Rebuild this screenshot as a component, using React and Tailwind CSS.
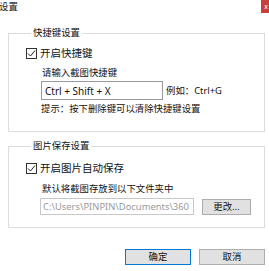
import React from "react";

const font = { fontFamily: '"Noto Sans", "Noto Sans CJK SC", sans-serif' };

const Check = () => (
  <span className="w-[11px] h-[11px] border border-[#333] bg-white flex items-center justify-center shrink-0">
    <svg width="9" height="9" viewBox="0 0 9 9">
      <path d="M1 4.5 L3.5 7 L8 1.5" fill="none" stroke="#222" strokeWidth="1" />
    </svg>
  </span>
);

export default function App() {
  return (
    <div
      className="w-[269px] h-[271px] bg-white text-[9.4px] leading-none text-[#111] overflow-hidden flex flex-col"
      style={font}
    >
      {/* title bar */}
      <div className="h-[14px] flex items-start justify-between">
        <span className="ml-[-1px] mt-[2px] text-[9.4px]">设置</span>
        <div className="w-[8px] h-[13px] bg-[#c9403a] flex items-center justify-end pr-[1px]">
          <span className="text-white text-[7px] leading-none">x</span>
        </div>
      </div>

      {/* shortcut group */}
      <fieldset className="ml-[8px] mr-[4px] mt-[13px] border border-[#dcdcdc] h-[105px] pl-[17px]">
        <legend className="ml-[5px] px-[2px] leading-[12px]">快捷键设置</legend>
        <div className="flex items-center gap-[3px] mt-[9px]">
          <Check />
          <span className="text-[10.5px]">开启快捷键</span>
        </div>
        <div className="ml-[15px]">
          <div className="mt-[9px] ml-[1px]">请输入截图快捷键</div>
          <div className="flex items-center mt-[4px]">
            <div className="w-[122px] h-[19px] border border-[#9a9a9a] flex items-center pl-[3px] text-[10px]">
              Ctrl + Shift + X
            </div>
            <span className="ml-[3px]">例如：Ctrl+G</span>
          </div>
          <div className="mt-[4px]">提示：按下删除键可以清除快捷键设置</div>
        </div>
      </fieldset>

      {/* save group */}
      <fieldset className="ml-[8px] mr-[4px] mt-[8px] border border-[#dcdcdc] h-[88px] pl-[17px]">
        <legend className="ml-[5px] px-[2px] leading-[12px]">图片保存设置</legend>
        <div className="flex items-center gap-[3px] mt-[11px]">
          <Check />
          <span className="text-[10.5px]">开启图片自动保存</span>
        </div>
        <div className="ml-[14px]">
          <div className="mt-[10px] ml-[2px]">默认将截图存放到以下文件夹中</div>
          <div className="flex items-center mt-[5px]">
            <div className="w-[154px] h-[17px] border border-[#c8c8c8] flex items-center pl-[2px] text-[#9a9a9a] text-[9.4px] overflow-hidden whitespace-nowrap">
              C:\Users\PINPIN\Documents\360
            </div>
            <button className="ml-[8px] w-[49px] h-[16px] border border-[#acacac] bg-[#e1e1e1] flex items-center justify-center">
              更改...
            </button>
          </div>
        </div>
      </fieldset>

      {/* buttons */}
      <div className="flex justify-end gap-[8px] mt-[21px] mr-[4px]">
        <button className="w-[66px] h-[16px] border border-[#0078d7] bg-[#e1e1e1] flex items-center justify-center">
          确定
        </button>
        <button className="w-[66px] h-[16px] border border-[#adadad] bg-[#e1e1e1] flex items-center justify-center">
          取消
        </button>
      </div>
    </div>
  );
}
